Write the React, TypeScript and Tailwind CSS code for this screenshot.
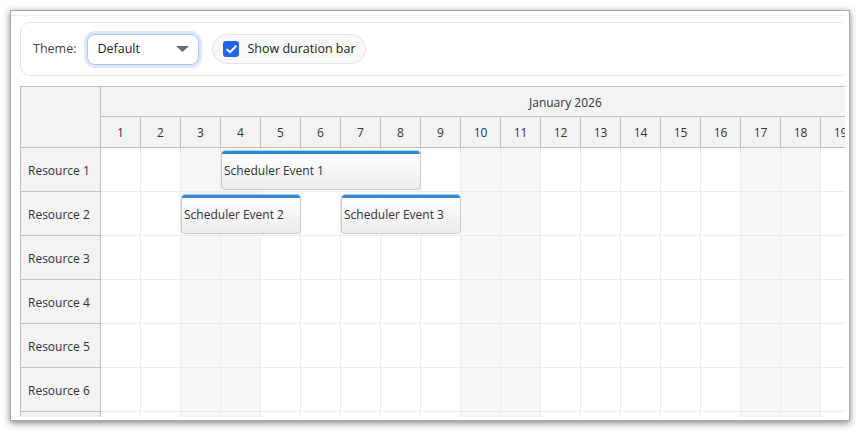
import React from "react";

const days = Array.from({ length: 19 }, (_, i) => i + 1);
const weekend = new Set([3, 4, 10, 11, 17, 18]);
const resources = ["Resource 1", "Resource 2", "Resource 3", "Resource 4", "Resource 5", "Resource 6", "Resource 7"];

const events = [
  { row: 0, start: 4, span: 5, text: "Scheduler Event 1" },
  { row: 1, start: 3, span: 3, text: "Scheduler Event 2" },
  { row: 1, start: 7, span: 3, text: "Scheduler Event 3" },
];

function Toolbar() {
  return (
    <div className="flex h-[54px] w-[840px] shrink-0 items-center rounded-[10px] border border-[#e4e4e4] bg-white text-[13px] text-[#333]">
      <span className="ml-[12px] text-[12.5px] text-[#444]">Theme:</span>
      <div className="ml-[11px] flex h-[31px] w-[112px] items-center justify-between rounded-[8px] border border-[#a9c9f7] bg-white pl-[9px] pr-[9px] ring-[3px] ring-[#dde8fc]">
        <span className="text-[12.5px] text-[#222]">Default</span>
        <svg width="13" height="6" viewBox="0 0 13 6">
          <path d="M0 0H13L6.5 6Z" fill="#6b6b6b" />
        </svg>
      </div>
      <label className="ml-[13px] flex h-[30px] items-center rounded-full border border-[#e4e4e4] bg-[#f8f8f8] pl-[10px] pr-[9px]">
        <span className="flex h-[16px] w-[16px] items-center justify-center rounded-[3px] bg-[#2563eb]">
          <svg width="11" height="9" viewBox="0 0 11 9">
            <path d="M1.2 4.6L4 7.3L9.8 1.3" stroke="white" strokeWidth="2" fill="none" strokeLinecap="round" strokeLinejoin="round" />
          </svg>
        </span>
        <span className="ml-[8px] text-[12.5px] text-[#222]">Show duration bar</span>
      </label>
    </div>
  );
}

function Scheduler() {
  return (
    <div className="mt-[10px] w-[900px] shrink-0 border-l border-t border-[#c0c0c0] text-[12px] text-[#333]">
      <div className="flex">
        <div className="h-[61px] w-[80px] shrink-0 border-b border-r border-[#c0c0c0] bg-[#f3f3f3]" />
        <div className="flex flex-col bg-[#f3f3f3]">
          <div className="flex h-[30px] items-center border-b border-[#c0c0c0] pl-[428px] pt-[2px]">January 2026</div>
          <div className="flex h-[31px]">
            {days.map((d) => (
              <div key={d} className="flex w-[40px] shrink-0 items-center justify-center border-b border-r border-[#c0c0c0] pt-[1px]">
                {d}
              </div>
            ))}
          </div>
        </div>
      </div>
      {resources.map((name, r) => (
        <div key={name} className="flex h-[44px]">
          <div className="flex w-[80px] shrink-0 items-center border-b border-r border-[#c0c0c0] bg-[#f3f3f3] pl-[7px] pt-[2px]">
            {name}
          </div>
          <div className="relative flex">
            {days.map((d) => (
              <div
                key={d}
                className={`w-[40px] shrink-0 border-b border-r border-[#ebebeb] ${weekend.has(d) ? "bg-[#f7f7f7]" : "bg-white"}`}
              />
            ))}
            {events
              .filter((e) => e.row === r)
              .map((e) => (
                <div
                  key={e.text}
                  className="absolute top-[2px] flex h-[40px] flex-col overflow-hidden rounded-[4px] border border-[#c8c8c8] bg-gradient-to-b from-white to-[#ececec]"
                  style={{ left: (e.start - 1) * 40, width: e.span * 40 }}
                >
                  <div className="-mx-px -mt-px h-[4px] shrink-0 rounded-t-[4px] bg-[#2b8be0]" />
                  <div className="flex flex-1 items-center pl-[2px] pb-[1px] text-[12px] text-[#333]">{e.text}</div>
                </div>
              ))}
          </div>
        </div>
      ))}
    </div>
  );
}

export default function App() {
  return (
    <div className="h-[432px] w-[860px] overflow-hidden bg-white pl-[10px] pt-[10px] font-['Open_Sans',sans-serif]">
      <div className="h-[411px] w-[840px] border border-[#a8a8a8] bg-white shadow-[0_2px_7px_rgba(0,0,0,0.5)]">
        <div className="mt-[4px] flex h-[402px] w-[834px] flex-col overflow-hidden border-t border-[#ececec] pl-[9px] pt-[6px]">
          <Toolbar />
          <Scheduler />
        </div>
      </div>
    </div>
  );
}
